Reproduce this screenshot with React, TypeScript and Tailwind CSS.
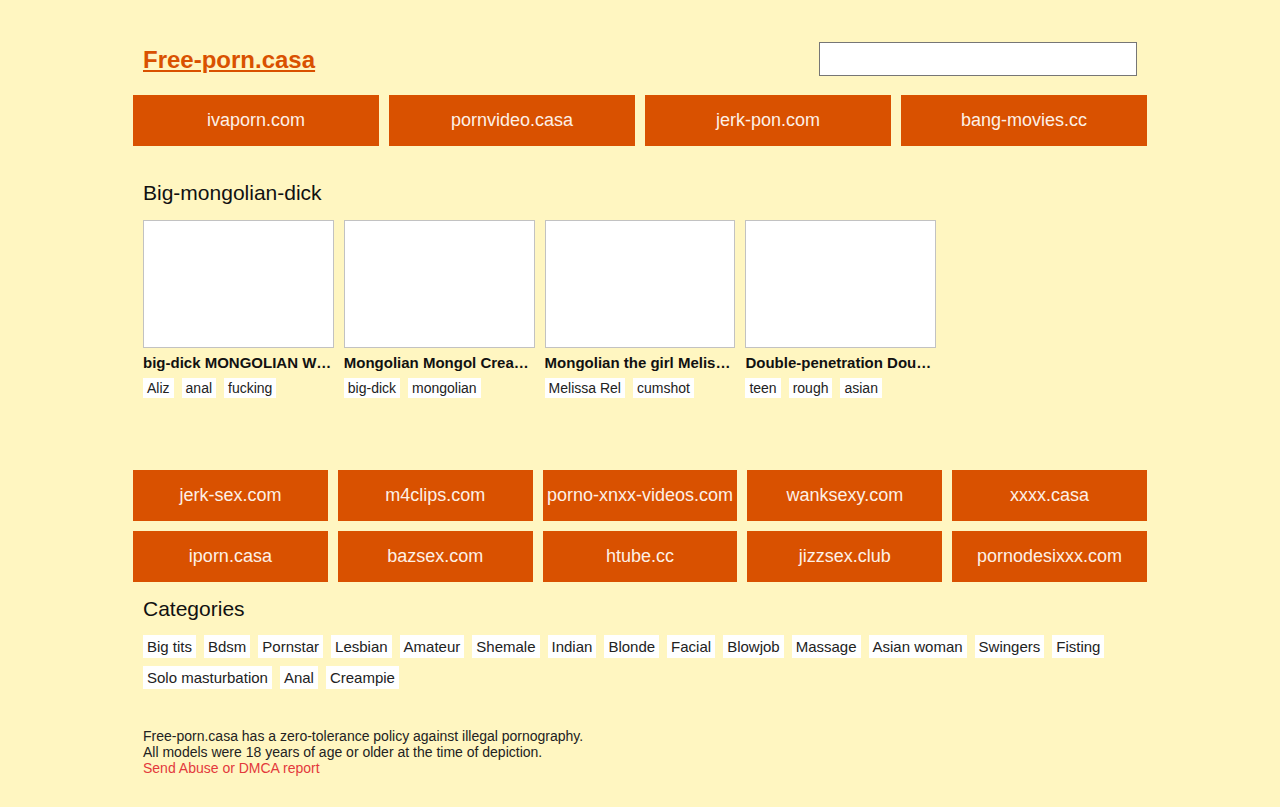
const topLinks = ["ivaporn.com", "pornvideo.casa", "jerk-pon.com", "bang-movies.cc"];

const videos = [
  { title: "big-dick MONGOLIAN WIFE anal", tags: ["Aliz", "anal", "fucking"] },
  { title: "Mongolian Mongol Creampie", tags: ["big-dick", "mongolian"] },
  { title: "Mongolian the girl Melissa Rel", tags: ["Melissa Rel", "cumshot"] },
  { title: "Double-penetration Double", tags: ["teen", "rough", "asian"] },
];

const bottomLinks = [
  "jerk-sex.com",
  "m4clips.com",
  "porno-xnxx-videos.com",
  "wanksexy.com",
  "xxxx.casa",
  "iporn.casa",
  "bazsex.com",
  "htube.cc",
  "jizzsex.club",
  "pornodesixxx.com",
];

const categories = [
  "Big tits",
  "Bdsm",
  "Pornstar",
  "Lesbian",
  "Amateur",
  "Shemale",
  "Indian",
  "Blonde",
  "Facial",
  "Blowjob",
  "Massage",
  "Asian woman",
  "Swingers",
  "Fisting",
  "Solo masturbation",
  "Anal",
  "Creampie",
];

function SiteButton({ label }: { label: string }) {
  return (
    <a
      href="#"
      className="flex h-[51px] items-center justify-center bg-[#d95100] text-[18px] text-[#fdf0e6] no-underline"
    >
      {label}
    </a>
  );
}

export default function App() {
  return (
    <div className="min-h-[807px] bg-[#fff6c1] font-['Liberation_Sans',Arial,sans-serif] text-[#111]">
      <div className="mx-auto w-[1014px]">
        <header className="flex items-start justify-between px-[10px] pt-[42px] pb-[17px]">
          <a href="#" className="text-[24px] font-bold leading-[36px] text-[#d95100] underline">
            Free-porn.casa
          </a>
          <input
            type="text"
            className="h-[34px] w-[318px] border border-[#767676] bg-white px-2 text-[14px] outline-none"
          />
        </header>

        <nav className="grid grid-cols-4 gap-[10px]">
          {topLinks.map((l) => (
            <SiteButton key={l} label={l} />
          ))}
        </nav>

        <h2 className="mt-[35px] px-[10px] text-[21px] leading-[24px] font-normal">Big-mongolian-dick</h2>

        <div className="mt-[15px] grid grid-cols-5 gap-[10px] px-[10px]">
          {videos.map((v) => (
            <div key={v.title} className="min-w-0">
              <div className="h-[128px] border border-[#c2c2c2] bg-white" />
              <div className="mt-[6px] truncate text-[15px] leading-[18px] font-bold">{v.title}</div>
              <div className="mt-[6px] flex flex-wrap gap-[8px]">
                {v.tags.map((t) => (
                  <span key={t} className="bg-white px-[4px] text-[14px] leading-[20px] text-[#222]">
                    {t}
                  </span>
                ))}
              </div>
            </div>
          ))}
        </div>

        <div className="mt-[72px] grid grid-cols-5 gap-[10px]">
          {bottomLinks.map((l) => (
            <SiteButton key={l} label={l} />
          ))}
        </div>

        <h2 className="mt-[15px] px-[10px] text-[21px] leading-[24px] font-normal">Categories</h2>
        <div className="mt-[14px] flex flex-wrap gap-[8px] px-[10px]">
          {categories.map((c) => (
            <a href="#" key={c} className="bg-white px-[4px] text-[15px] leading-[23px] text-[#222] no-underline">
              {c}
            </a>
          ))}
        </div>

        <footer className="mt-[39px] px-[10px] pb-[30px] text-[14px] leading-[16px] text-[#222]">
          <p>Free-porn.casa has a zero-tolerance policy against illegal pornography.</p>
          <p>All models were 18 years of age or older at the time of depiction.</p>
          <a href="#" className="text-[#e3393c] no-underline">
            Send Abuse or DMCA report
          </a>
        </footer>
      </div>
    </div>
  );
}
